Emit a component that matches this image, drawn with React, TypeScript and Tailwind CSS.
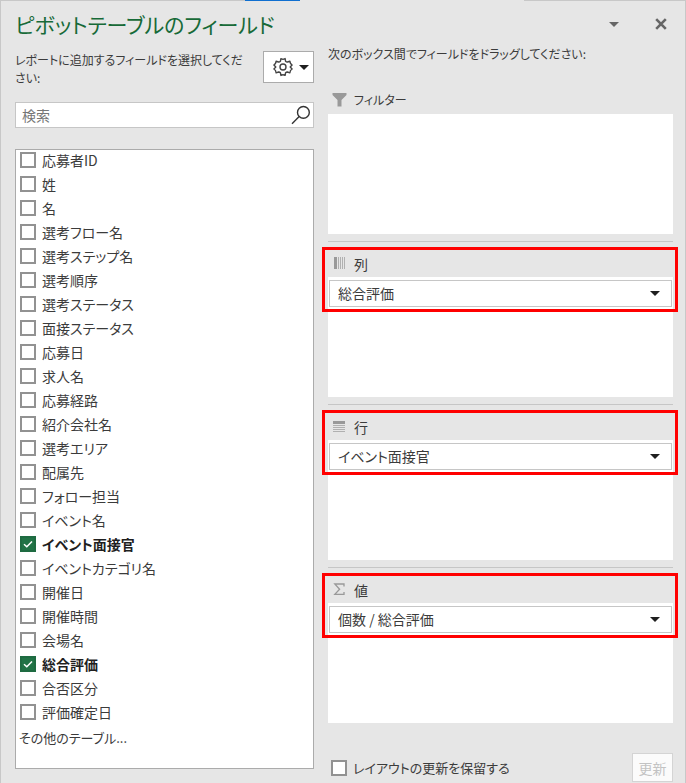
import { useState } from "react";

type Field = { name: string; checked?: boolean };

const fields: Field[] = [
  { name: "応募者ID" },
  { name: "姓" },
  { name: "名" },
  { name: "選考フロー名" },
  { name: "選考ステップ名" },
  { name: "選考順序" },
  { name: "選考ステータス" },
  { name: "面接ステータス" },
  { name: "応募日" },
  { name: "求人名" },
  { name: "応募経路" },
  { name: "紹介会社名" },
  { name: "選考エリア" },
  { name: "配属先" },
  { name: "フォロー担当" },
  { name: "イベント名" },
  { name: "イベント面接官", checked: true },
  { name: "イベントカテゴリ名" },
  { name: "開催日" },
  { name: "開催時間" },
  { name: "会場名" },
  { name: "総合評価", checked: true },
  { name: "合否区分" },
  { name: "評価確定日" },
];

function Tick({ id, checked, onChange }: { id: string; checked: boolean; onChange: () => void }) {
  return (
    <span className="grid size-4 shrink-0 place-items-center">
      <input
        id={id}
        type="checkbox"
        checked={checked}
        onChange={onChange}
        className="col-start-1 row-start-1 size-4 appearance-none border-2 border-[#929292] bg-white checked:border-[#1e6b41] checked:bg-[#217346]"
      />
      {checked && (
        <svg viewBox="0 0 16 16" className="pointer-events-none col-start-1 row-start-1 size-4" fill="none" stroke="white" strokeWidth="1.5">
          <path d="M4 8.2 L6.8 10.8 L12 5.4" />
        </svg>
      )}
    </span>
  );
}

function Caret({ className }: { className: string }) {
  return (
    <svg viewBox="0 0 10 5" className={className} fill="currentColor" aria-hidden="true">
      <path d="M0 0H10L5 5Z" />
    </svg>
  );
}

function FilterIcon() {
  return (
    <svg viewBox="0 0 16 16" className="size-4" fill="#999" aria-hidden="true">
      <path d="M0.5 1H14.5V3L9.5 8V14.5H5.5V8L0.5 3Z" />
    </svg>
  );
}

function ColumnsIcon() {
  return (
    <svg viewBox="0 0 16 16" className="size-4" aria-hidden="true">
      <path d="M2 1H5V13H2Z" fill="#999" />
      <path d="M6.5 1V13M8.5 1V13M10.5 1V13M12.5 1V13" stroke="#b0b0b0" />
    </svg>
  );
}

function RowsIcon() {
  return (
    <svg viewBox="0 0 16 16" className="size-4" aria-hidden="true">
      <path d="M1 2H13V5H1Z" fill="#999" />
      <path d="M1 6.5H13M1 8.5H13M1 10.5H13M1 12.5H13" stroke="#b0b0b0" />
    </svg>
  );
}

function SigmaIcon() {
  return (
    <svg viewBox="0 0 16 16" className="size-4" fill="none" stroke="#999" strokeWidth="1.3" aria-hidden="true">
      <path d="M12 4.4V2H2.8L7.6 7.2L2.8 12.4H12V10" />
    </svg>
  );
}

function Area({ id, title, value, icon }: { id: string; title: string; value: string; icon: React.ReactNode }) {
  return (
    <section className="relative mt-[7px] border-t border-[#c6c6c6]">
      <label htmlFor={id} className="flex h-[35px] items-center gap-[6px] px-1 pt-2">
        {icon}
        {title}
      </label>
      <div className="h-[120px] bg-white px-px pt-[3px]">
        <div className="relative">
          <select
            id={id}
            className="block h-[27px] w-full appearance-none border border-[#c6c6c6] bg-white pr-8 pb-px pl-2"
          >
            <option>{value}</option>
          </select>
          <Caret className="pointer-events-none absolute top-[11px] right-3 h-[5px] w-[10px] text-[#1f1f1f]" />
        </div>
      </div>
      <div className="pointer-events-none absolute top-[5px] -right-[5px] -left-[6px] h-[65px] border-3 border-[#f00]" />
    </section>
  );
}

export default function App() {
  const [checked, setChecked] = useState(() => fields.map((f) => !!f.checked));
  const [defer, setDefer] = useState(false);

  return (
    <main
      lang="ja"
      className="relative min-h-screen border-x border-[#c8c8c8] bg-[#e6e6e6] pr-3 pl-[14px] font-['Noto_Sans_CJK_JP',sans-serif] text-sm leading-[18px] text-[#3b3b3b] [font-feature-settings:'palt']"
    >
      <div className="absolute inset-x-0 top-0 flex h-px">
        <div className="w-[244px] bg-[#c8c8c8]" />
        <div className="w-[55px] bg-[#0f6fd0]" />
        <div className="w-[224px]" />
        <div className="flex-1 bg-[#c8c8c8]" />
      </div>

      <header className="flex h-[45px] items-center justify-between pt-[3px]">
        <h1 className="text-[21px] leading-8 text-[#176a38]">ピボットテーブルのフィールド</h1>
        <div className="flex items-center gap-9 pr-[6px] text-[#666]">
          <button type="button" aria-label="作業ウィンドウのオプション">
            <Caret className="h-[5px] w-[10px]" />
          </button>
          <button type="button" aria-label="閉じる">
            <svg viewBox="0 0 12 12" className="size-3" stroke="currentColor" strokeWidth="2.6">
              <path d="M1.2 1.2L10.8 10.8M10.8 1.2L1.2 10.8" />
            </svg>
          </button>
        </div>
      </header>

      <div className="grid grid-cols-[299fr_345fr] gap-[14px]">
        <div className="pt-[6px]">
          <div className="flex h-9 items-start justify-between">
            <p className="text-xs leading-[18px]">
              レポートに追加するフィールドを選択してくだ
              <br />
              さい:
            </p>
            <button
              type="button"
              aria-label="ツール"
              className="flex h-8 w-[51px] shrink-0 items-center justify-end gap-[6px] border border-[#ababab] bg-white pr-1"
            >
              <svg viewBox="0 0 20 20" className="size-5" fill="none" stroke="#444" strokeWidth="1.4" strokeLinejoin="round">
                <path d="M7.4 4.3 L7.9 1.6 Q10 2.9 12.1 1.6 L12.6 4.3 Q13.4 5.1 14.4 5 L16.9 4.2 Q17 6.7 19.1 8 L17.2 10 L19.1 12 Q17 13.3 16.9 15.8 L14.4 15 Q13.4 14.9 12.6 15.7 L12.1 18.4 Q10 17.1 7.9 18.4 L7.4 15.7 Q6.6 14.9 5.6 15 L3.1 15.8 Q3 13.3 0.9 12 L2.8 10 L0.9 8 Q3 6.7 3.1 4.2 L5.6 5 Q6.6 5.1 7.4 4.3 Z" />
                <circle cx="10" cy="10" r="3" />
              </svg>
              <Caret className="h-[5px] w-[10px] text-[#1f1f1f]" />
            </button>
          </div>

          <div className="relative mt-[15px]">
            <input
              type="text"
              aria-label="検索"
              placeholder="検索"
              className="block h-[26px] w-full border border-[#c6c6c6] bg-white pr-8 pb-px pl-[6px] placeholder:text-[#767676]"
            />
            <svg viewBox="0 0 20 20" className="pointer-events-none absolute top-[3px] right-[3px] size-5" fill="none" stroke="#333" strokeWidth="1.4">
              <circle cx="12.4" cy="7.4" r="5.9" />
              <path d="M8.2 11.6L1 18.8" />
            </svg>
          </div>

          <div className="mt-[21px] h-[620px] border border-[#ababab] bg-white">
            <ul className="flex flex-col gap-1 pl-1">
              {fields.map((f, i) => (
                <li key={f.name} className="flex h-5 items-center gap-[6px]">
                  <Tick
                    id={`field-${i}`}
                    checked={checked[i]}
                    onChange={() => setChecked(checked.map((c, j) => (j === i ? !c : c)))}
                  />
                  <label htmlFor={`field-${i}`} className={checked[i] ? "pb-px font-bold text-[#1f1f1f]" : "pb-px"}>
                    {f.name}
                  </label>
                </li>
              ))}
            </ul>
            <a href="#tables" className="mt-[7px] block pl-[3px] text-[13px]">
              その他のテーブル...
            </a>
          </div>
        </div>

        <div>
          <p className="text-xs leading-[18px]">次のボックス間でフィールドをドラッグしてください:</p>

          <section className="mt-[23px]">
            <h2 className="flex h-7 items-center gap-[6px] px-1 text-xs">
              <FilterIcon />
              フィルター
            </h2>
            <div className="h-[120px] bg-white" />
          </section>
          <Area id="columns" title="列" value="総合評価" icon={<ColumnsIcon />} />
          <Area id="rows" title="行" value="イベント面接官" icon={<RowsIcon />} />
          <Area id="values" title="値" value="個数 / 総合評価" icon={<SigmaIcon />} />

          <div className="mt-[30px] flex items-center justify-between">
            <div className="flex items-center gap-[6px] pl-[3px]">
              <Tick id="defer" checked={defer} onChange={() => setDefer(!defer)} />
              <label htmlFor="defer" className="text-[13px]">レイアウトの更新を保留する</label>
            </div>
            <button type="button" disabled className="h-[29px] w-[41px] border border-[#d4d4d4] bg-[#fbfbfb] text-[#c3c3c3]">
              更新
            </button>
          </div>
        </div>
      </div>
    </main>
  );
}
